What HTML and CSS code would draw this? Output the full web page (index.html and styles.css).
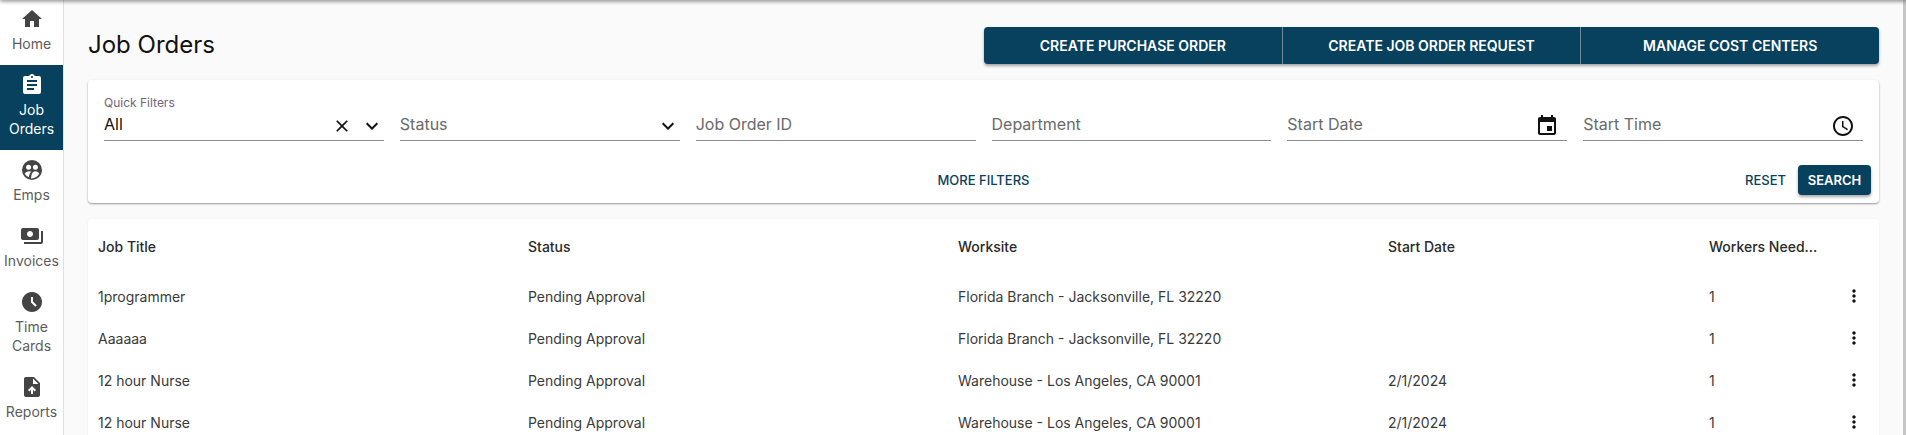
FILE: index.html
```html
<!DOCTYPE html>
<html lang="en">
<head>
    <meta charset="UTF-8">
    <meta name="viewport" content="width=device-width, initial-scale=1.0">
    <title>Job Orders</title>
    <link rel="stylesheet" href="styles.css">
</head>
<body>
    <div class="top-shadow"></div>

    <nav class="sidebar">
        <a class="nav-item nav-first">
            <svg viewBox="0 0 24 24"><path d="M10 20v-6h4v6h5v-8h3L12 3 2 12h3v8z"/></svg>
            <span>Home</span>
        </a>
        <a class="nav-item active">
            <svg viewBox="0 0 24 24"><path d="M19 3h-4.18C14.4 1.84 13.3 1 12 1c-1.3 0-2.4.84-2.82 2H5c-1.1 0-2 .9-2 2v14c0 1.1.9 2 2 2h14c1.1 0 2-.9 2-2V5c0-1.1-.9-2-2-2zm-7 0c.55 0 1 .45 1 1s-.45 1-1 1-1-.45-1-1 .45-1 1-1zm2 14H7v-2h7v2zm3-4H7v-2h10v2zm0-4H7V7h10v2z"/></svg>
            <span>Job<br>Orders</span>
        </a>
        <a class="nav-item">
            <svg viewBox="0 0 24 24">
                <circle cx="12" cy="12" r="10"/>
                <circle class="cut" cx="8.600" cy="9.200" r="2.500"/>
                <circle class="cut" cx="15.400" cy="9.200" r="2.500"/>
                <path class="cut" d="M4.700 15.800c.8-1.600 2.600-2.600 4.500-2.600.9 0 1.700.2 2.300.6-1 .6-1.700 1.400-2 2.400l-.6 3c-1.800-.7-3.300-1.900-4.200-3.400z"/>
                <path class="cut" d="M11 20.400l.6-3.900c.4-1.900 2.100-3.300 3.900-3.300 1.600 0 3 .9 3.800 2.400-1.500 3-4.600 5-8.300 4.800z"/>
            </svg>
            <span>Emps</span>
        </a>
        <a class="nav-item">
            <svg viewBox="0 0 24 24"><path d="M19 14V6c0-1.100-.9-2-2-2H3c-1.100 0-2 .9-2 2v8c0 1.100.9 2 2 2h14c1.100 0 2-.9 2-2zm-9-1c-1.660 0-3-1.340-3-3s1.340-3 3-3 3 1.340 3 3-1.340 3-3 3zm13-6v11c0 1.100-.9 2-2 2H4v-2h17V7h2z"/></svg>
            <span>Invoices</span>
        </a>
        <a class="nav-item">
            <svg viewBox="0 0 24 24"><path d="M11.990 2C6.470 2 2 6.480 2 12s4.470 10 9.990 10C17.520 22 22 17.520 22 12S17.520 2 11.990 2zm3.300 14.710L11 12.410V7h2v4.590l3.710 3.710-1.420 1.410z"/></svg>
            <span>Time<br>Cards</span>
        </a>
        <a class="nav-item">
            <svg viewBox="0 0 24 24"><path fill-rule="evenodd" d="M14 2H6c-1.100 0-1.990.9-1.990 2L4 20c0 1.100.89 2 1.990 2H18c1.100 0 2-.9 2-2V8l-6-6zM13 9V3.500L18.500 9H13zM8 15.010l1.410 1.410L11 14.840V19h2v-4.160l1.590 1.590L16 15.010 12.010 11 8 15.010z"/></svg>
            <span>Reports</span>
        </a>
    </nav>

    <main class="content">
        <header class="page-header">
            <h1>Job Orders</h1>
            <div class="button-group">
                <button>Create Purchase Order</button>
                <button>Create Job Order Request</button>
                <button>Manage Cost Centers</button>
            </div>
        </header>

        <section class="card filters">
            <div class="filter-grid">
                <div class="field">
                    <label>Quick Filters</label>
                    <div class="field-row">
                        <span class="value">All</span>
                        <svg class="icon-clear" viewBox="0 0 24 24"><path d="M19 6.410 17.590 5 12 10.590 6.410 5 5 6.410 10.590 12 5 17.590 6.410 19 12 13.410 17.590 19 19 17.590 13.410 12z"/></svg>
                        <svg viewBox="0 0 24 24"><path d="M16.590 8.590 12 13.170 7.410 8.590 6 10l6 6 6-6z"/></svg>
                    </div>
                </div>
                <div class="field">
                    <div class="field-row">
                        <span class="placeholder">Status</span>
                        <svg viewBox="0 0 24 24"><path d="M16.590 8.590 12 13.170 7.410 8.590 6 10l6 6 6-6z"/></svg>
                    </div>
                </div>
                <div class="field">
                    <div class="field-row"><span class="placeholder">Job Order ID</span></div>
                </div>
                <div class="field">
                    <div class="field-row"><span class="placeholder">Department</span></div>
                </div>
                <div class="field">
                    <div class="field-row">
                        <span class="placeholder">Start Date</span>
                        <svg class="icon-end" viewBox="0 0 24 24"><path d="M17 12h-5v5h5v-5zM16 1v2H8V1H6v2H5c-1.110 0-1.990.9-1.990 2L3 19c0 1.100.89 2 2 2h14c1.100 0 2-.9 2-2V5c0-1.100-.9-2-2-2h-1V1h-2zm3 18H5V8h14v11z"/></svg>
                    </div>
                </div>
                <div class="field">
                    <div class="field-row">
                        <span class="placeholder">Start Time</span>
                        <svg class="icon-end" viewBox="0 0 24 24"><path d="M11.990 2C6.470 2 2 6.480 2 12s4.470 10 9.990 10C17.520 22 22 17.520 22 12S17.520 2 11.990 2zM12 20c-4.420 0-8-3.580-8-8s3.580-8 8-8 8 3.580 8 8-3.580 8-8 8zM12.500 7H11v6l5.250 3.150.75-1.230-4.500-2.670z"/></svg>
                    </div>
                </div>
            </div>
            <div class="filter-actions">
                <span></span>
                <button class="text-btn">More Filters</button>
                <div class="actions-right">
                    <button class="text-btn">Reset</button>
                    <button class="search-btn">Search</button>
                </div>
            </div>
        </section>

        <section class="card results">
            <table>
                <thead>
                    <tr>
                        <th class="col-wide">Job Title</th>
                        <th class="col-wide">Status</th>
                        <th class="col-wide">Worksite</th>
                        <th class="col-date">Start Date</th>
                        <th>Workers Need...</th>
                        <th class="col-menu"></th>
                    </tr>
                </thead>
                <tbody>
                    <tr>
                        <td>1programmer</td><td>Pending Approval</td><td>Florida Branch - Jacksonville, FL 32220</td><td></td><td>1</td>
                        <td class="col-menu"><svg viewBox="0 0 24 24"><path d="M12 8c1.100 0 2-.9 2-2s-.9-2-2-2-2 .9-2 2 .9 2 2 2zm0 2c-1.100 0-2 .9-2 2s.9 2 2 2 2-.9 2-2-.9-2-2-2zm0 6c-1.100 0-2 .9-2 2s.9 2 2 2 2-.9 2-2-.9-2-2-2z"/></svg></td>
                    </tr>
                    <tr>
                        <td>Aaaaaa</td><td>Pending Approval</td><td>Florida Branch - Jacksonville, FL 32220</td><td></td><td>1</td>
                        <td class="col-menu"><svg viewBox="0 0 24 24"><path d="M12 8c1.100 0 2-.9 2-2s-.9-2-2-2-2 .9-2 2 .9 2 2 2zm0 2c-1.100 0-2 .9-2 2s.9 2 2 2 2-.9 2-2-.9-2-2-2zm0 6c-1.100 0-2 .9-2 2s.9 2 2 2 2-.9 2-2-.9-2-2-2z"/></svg></td>
                    </tr>
                    <tr>
                        <td>12 hour Nurse</td><td>Pending Approval</td><td>Warehouse - Los Angeles, CA 90001</td><td>2/1/2024</td><td>1</td>
                        <td class="col-menu"><svg viewBox="0 0 24 24"><path d="M12 8c1.100 0 2-.9 2-2s-.9-2-2-2-2 .9-2 2 .9 2 2 2zm0 2c-1.100 0-2 .9-2 2s.9 2 2 2 2-.9 2-2-.9-2-2-2zm0 6c-1.100 0-2 .9-2 2s.9 2 2 2 2-.9 2-2-.9-2-2-2z"/></svg></td>
                    </tr>
                    <tr>
                        <td>12 hour Nurse</td><td>Pending Approval</td><td>Warehouse - Los Angeles, CA 90001</td><td>2/1/2024</td><td>1</td>
                        <td class="col-menu"><svg viewBox="0 0 24 24"><path d="M12 8c1.100 0 2-.9 2-2s-.9-2-2-2-2 .9-2 2 .9 2 2 2zm0 2c-1.100 0-2 .9-2 2s.9 2 2 2 2-.9 2-2-.9-2-2-2zm0 6c-1.100 0-2 .9-2 2s.9 2 2 2 2-.9 2-2-.9-2-2-2z"/></svg></td>
                    </tr>
                </tbody>
            </table>
        </section>
    </main>

    <div class="scroll-strip"></div>
</body>
</html>
```

FILE: styles.css
```css
* {
    box-sizing: border-box;
}

html, body {
    height: 100%;
    overflow: hidden;
}

body {
    margin: 0;
    display: flex;
    background-color: #fafafa;
    font-family: Inter, "Open Sans", sans-serif;
    color: #222;
}

.top-shadow {
    position: absolute;
    top: -4px;
    left: 0;
    right: 0;
    height: 4px;
    box-shadow: 0 1px 4px rgba(0, 0, 0, 0.55);
    z-index: 2;
}

/* left nav */
.sidebar {
    flex: 0 0 64px;
    background-color: #fff;
    border-right: 1px solid #e0e0e0;
}

.nav-item {
    display: flex;
    flex-direction: column;
    align-items: center;
    padding: 8px 0 12px;
    gap: 3px;
    font-size: 14px;
    line-height: 19px;
    text-align: center;
    color: #5c5c5c;
}

.nav-first {
    margin-top: -1px;
}

.nav-item svg {
    width: 24px;
    height: 24px;
    fill: #444;
}

.nav-item svg .cut {
    fill: #fff;
}

.nav-item.active {
    background-color: #07415e;
    color: #fff;
}

.nav-item.active svg {
    fill: #fff;
}

/* main column */
.content {
    flex: 1;
    min-width: 0;
    padding: 27px 24px 0;
}

.page-header {
    display: flex;
    justify-content: space-between;
    align-items: center;
    margin-bottom: 16px;
}

.page-header h1 {
    margin: 0 0 2px;
    font-size: 24px;
    font-weight: 400;
    color: #111;
}

.button-group {
    display: flex;
    width: 895px;
    height: 37px;
    border-radius: 4px;
    background-color: #07415e;
    box-shadow: 0 2px 3px rgba(0, 0, 0, 0.35);
}

.button-group button {
    flex: 1;
    border: 0;
    border-right: 1px solid #6b8c9c;
    background: none;
    color: #fff;
    font-family: inherit;
    font-size: 14px;
    font-weight: 600;
    text-transform: uppercase;
}

.button-group button:last-child {
    border-right: 0;
}

.card {
    background-color: #fff;
    border-radius: 4px;
}

.filters {
    padding: 16px 16px 8px;
    margin-bottom: 16px;
    box-shadow: 0 1px 2px rgba(0, 0, 0, 0.4);
}

.filter-grid {
    display: grid;
    grid-template-columns: repeat(6, 1fr);
    gap: 16px;
}

.field {
    height: 45px;
    display: flex;
    flex-direction: column;
    justify-content: flex-end;
}

.field label {
    font-size: 12px;
    line-height: 14px;
    margin-bottom: 2px;
    color: #6f667c;
}

.field-row {
    display: flex;
    align-items: flex-start;
    height: 29px;
    border-bottom: 1px solid #8f8f8f;
    font-size: 16px;
    line-height: 24px;
}

.field-row span {
    flex: 1;
}

.field-row svg {
    flex: none;
    width: 24px;
    height: 24px;
    margin-top: 2px;
    fill: #111;
}

.field-row .icon-clear {
    width: 20px;
    height: 20px;
    margin: 4px 8px 0 0;
}

.field-row .icon-end {
    margin-right: 8px;
}

.value {
    color: #111;
}

.placeholder {
    color: #6a6a6a;
}

.filter-actions {
    display: grid;
    grid-template-columns: 1fr auto 1fr;
    align-items: center;
    margin: 24px -8px 0;
    height: 30px;
}

.actions-right {
    display: flex;
    justify-content: flex-end;
    align-items: center;
    gap: 4px;
}

.text-btn, .search-btn {
    height: 30px;
    padding: 0 8px;
    border: 0;
    border-radius: 4px;
    font-family: inherit;
    font-size: 13px;
    font-weight: 500;
    text-transform: uppercase;
    background: none;
    color: #07415e;
}

.search-btn {
    width: 73px;
    font-weight: 600;
    background-color: #07415e;
    color: #fff;
    box-shadow: 0 2px 3px rgba(0, 0, 0, 0.35);
}

/* results table */
.results {
    box-shadow: 0 0 2px rgba(0, 0, 0, 0.08);
}

table {
    width: 100%;
    table-layout: fixed;
    border-collapse: collapse;
    font-size: 14px;
    color: #3a3a3a;
}

th {
    height: 56px;
    padding: 0 10px 2px;
    text-align: left;
    font-weight: 500;
    color: #2a2a2a;
    white-space: nowrap;
}

td {
    height: 42px;
    padding: 0 10px;
}

.col-wide {
    width: 430px;
}

.col-date {
    width: 321px;
}

.col-menu {
    width: 50px;
    padding: 0;
    text-align: center;
}

.col-menu svg {
    display: block;
    width: 20px;
    height: 20px;
    margin: 0 auto;
    fill: #111;
}

.scroll-strip {
    flex: 0 0 3px;
    background-color: #c6c6c6;
}
```
